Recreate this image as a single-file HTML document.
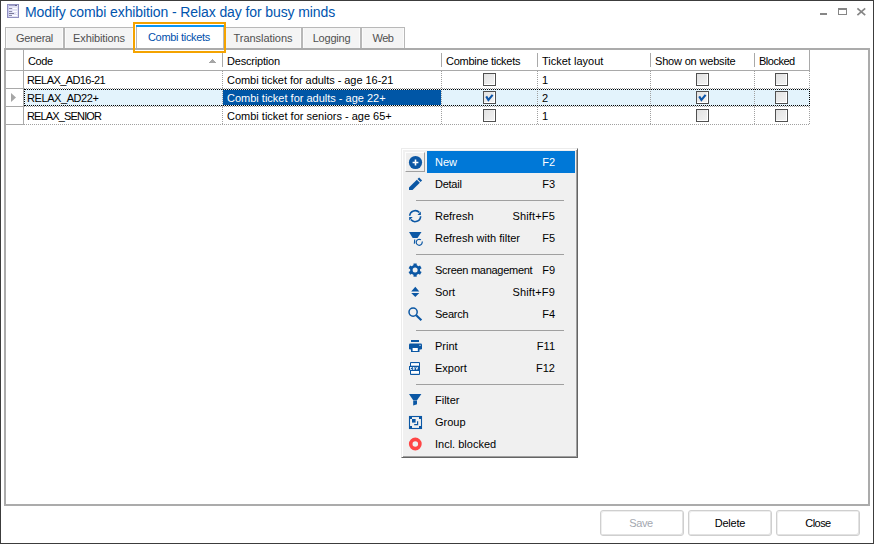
<!DOCTYPE html>
<html><head><meta charset="utf-8">
<style>
*{box-sizing:border-box;margin:0;padding:0}
html,body{width:874px;height:544px;overflow:hidden;background:#fff}
body{position:relative;font-family:"Liberation Sans",sans-serif;font-size:11px;color:#000}
.a{position:absolute}
.win{left:0;top:0;width:874px;height:544px;border:1px solid #3c3c3c}
.title{left:25px;top:4px;font-size:14px;line-height:16px;color:#0054ae;white-space:nowrap;letter-spacing:-0.1px}
.tab{position:absolute;top:27px;height:21px;border:1px solid #b8b8b8;border-bottom:none;background:#f4f4f4;color:#505050;text-align:center;line-height:21px;white-space:nowrap;box-shadow:inset 1px 0 #fbfbfb,inset -1px 0 #fbfbfb}
.grid{left:4px;top:48px;width:866px;height:458px;border:2px solid #ababab}
.hl{position:absolute;background:#a9a9a9}
.t{position:absolute;white-space:nowrap;line-height:13px}
.dv{position:absolute;width:1px;background-image:linear-gradient(#a0a0a0 50%,transparent 50%);background-size:1px 2px}
.dh{position:absolute;height:1px;background-image:linear-gradient(90deg,#a0a0a0 50%,transparent 50%);background-size:2px 1px}
.cb{position:absolute;width:13px;height:13px;border:1px solid #505050;background:linear-gradient(135deg,#e2e2e2,#f3f3f3);box-shadow:inset -1px -1px #fff}
.btn{position:absolute;top:510px;width:84px;height:26px;border:1px solid #cfcfcf;border-radius:3px;background:#fff;box-shadow:inset 1px 1px #eeeeee,inset -1px -1px #e2e2e2;text-align:center;line-height:24px;font-size:11px;color:#000}
.menu{left:401px;top:148px;width:177px;height:310px;background:#f0f0f0;border:1px solid;border-color:#ececec #646464 #646464 #ececec;box-shadow:inset 1px 1px #fff,inset -1px -1px #a0a0a0}
.mi{position:absolute;white-space:nowrap;line-height:13px}
.sep{position:absolute;left:416px;width:148px;height:1px;background:#a0a0a0}
</style></head><body>
<div class="a win"></div>
<!-- title icon -->
<svg class="a" style="left:7px;top:4px" width="12" height="14" viewBox="0 0 12 14">
<rect x="0.5" y="0.5" width="11" height="13" fill="#e2e2f6" stroke="#9090c0"/>
<rect x="1" y="1" width="1" height="12" fill="#c8c8f0"/>
<rect x="2" y="1" width="8" height="1" fill="#a0a0c8"/><rect x="8" y="1" width="2" height="1" fill="#606080"/>
<rect x="2" y="4" width="3" height="1" fill="#8a8aa8"/><rect x="6" y="4" width="4" height="1" fill="#fff"/>
<rect x="2" y="7" width="3" height="1" fill="#8a8aa8"/><rect x="6" y="7" width="4" height="1" fill="#fff"/>
<rect x="2" y="9" width="5" height="1" fill="#7a7a98"/><rect x="9" y="9" width="1" height="1" fill="#fff"/>
<rect x="2" y="11" width="3" height="1" fill="#8a8aa8"/><rect x="5" y="11" width="5" height="1" fill="#fff"/>
</svg>
<div class="a title">Modify combi exhibition - Relax day for busy minds</div>
<!-- window controls -->
<svg class="a" style="left:818px;top:6px" width="52" height="12" viewBox="0 0 52 12">
<rect x="2" y="7" width="7" height="2" fill="#868686"/>
<rect x="20.5" y="2.5" width="8" height="6" fill="none" stroke="#868686"/><rect x="20" y="2" width="9" height="2" fill="#868686"/>
<path d="M39.4 2.4 L47.2 9.2 M47.2 2.4 L39.4 9.2" stroke="#868686" stroke-width="1.7"/>
</svg>

<!-- tabs -->
<div class="tab" style="left:5px;width:59px;letter-spacing:-0.3px">General</div>
<div class="tab" style="left:64px;width:70px;letter-spacing:-0.12px">Exhibitions</div>
<div class="tab" style="left:224px;width:78px;letter-spacing:-0.05px">Translations</div>
<div class="tab" style="left:302px;width:59px;letter-spacing:-0.2px">Logging</div>
<div class="tab" style="left:361px;width:44px;letter-spacing:-0.45px">Web</div>
<div class="a" style="left:136px;top:25px;width:88px;height:23px;background:#fff;border-left:1px solid #b8b8b8;border-right:1px solid #b8b8b8"></div>
<div class="a" style="left:136px;top:25px;width:88px;height:2px;background:#0a96f5"></div>
<div class="a" style="left:136px;top:25px;width:88px;height:23px;color:#0050ac;text-align:center;line-height:21px;padding-top:2px;padding-right:2px;white-space:nowrap;letter-spacing:-0.3px">Combi tickets</div>

<!-- grid -->
<div class="a grid"></div>
<div class="a" style="left:133px;top:22px;width:93px;height:31px;border:2px solid #f4a300"></div>
<!-- header -->
<div class="hl" style="left:23px;top:50px;width:1px;height:20px"></div>
<div class="hl" style="left:222px;top:53px;width:1px;height:14px"></div>
<div class="hl" style="left:441px;top:53px;width:1px;height:14px"></div>
<div class="hl" style="left:537px;top:53px;width:1px;height:14px"></div>
<div class="hl" style="left:650px;top:53px;width:1px;height:14px"></div>
<div class="hl" style="left:754px;top:53px;width:1px;height:14px"></div>
<div class="hl" style="left:809px;top:50px;width:1px;height:21px"></div>
<div class="hl" style="left:6px;top:70px;width:804px;height:1px"></div>
<div class="t" style="left:28px;top:55px;letter-spacing:-0.4px">Code</div>
<svg class="a" style="left:209px;top:59px" width="7" height="4"><path d="M3 0h1v1h1v1h1v1h1v1H0V3h1V2h1V1h1Z" fill="#a6a6a6"/></svg>
<div class="t" style="left:227px;top:55px;letter-spacing:-0.2px">Description</div>
<div class="t" style="left:446px;top:55px;letter-spacing:-0.27px">Combine tickets</div>
<div class="t" style="left:542px;top:55px">Ticket layout</div>
<div class="t" style="left:655px;top:55px;letter-spacing:-0.18px">Show on website</div>
<div class="t" style="left:759px;top:55px;letter-spacing:-0.5px">Blocked</div>
<!-- indicator column -->
<div class="hl" style="left:23px;top:71px;width:1px;height:54px"></div>
<div class="hl" style="left:6px;top:88px;width:17px;height:1px"></div>
<div class="hl" style="left:6px;top:106px;width:17px;height:1px"></div>
<div class="hl" style="left:6px;top:124px;width:17px;height:1px"></div>
<svg class="a" style="left:11px;top:93px" width="6" height="10"><path d="M0 0 L5 4.5 L0 9Z" fill="#a6a6a6"/></svg>
<!-- row dotted lines -->
<div class="a" style="left:24px;top:89px;width:786px;height:17px;background:#e3f3fc"></div>
<div class="a" style="left:223px;top:90px;width:218px;height:15px;background:#0056a6"></div>

<div class="dh" style="left:24px;top:88px;width:786px"></div>
<div class="dh" style="left:24px;top:106px;width:786px"></div>
<div class="dh" style="left:24px;top:124px;width:786px"></div>
<div class="dv" style="left:222px;top:71px;height:54px"></div>
<div class="dv" style="left:441px;top:71px;height:54px"></div>
<div class="dv" style="left:537px;top:71px;height:54px"></div>
<div class="dv" style="left:650px;top:71px;height:54px"></div>
<div class="dv" style="left:754px;top:71px;height:54px"></div>
<div class="dv" style="left:809px;top:71px;height:54px"></div>
<!-- selected row -->
<div class="a" style="left:24px;top:89px;width:786px;height:17px;border:1px dotted #000"></div>
<!-- row texts -->
<div class="t" style="left:27px;top:74px;letter-spacing:-0.58px">RELAX_AD16-21</div>
<div class="t" style="left:227px;top:74px;letter-spacing:-0.05px">Combi ticket for adults - age 16-21</div>
<div class="t" style="left:542px;top:74px">1</div>
<div class="t" style="left:27px;top:92px;letter-spacing:-0.42px">RELAX_AD22+</div>
<div class="t" style="left:227px;top:92px;color:#fff">Combi ticket for adults - age 22+</div>
<div class="t" style="left:542px;top:92px">2</div>
<div class="t" style="left:27px;top:110px;letter-spacing:-0.85px">RELAX_SENIOR</div>
<div class="t" style="left:227px;top:110px">Combi ticket for seniors - age 65+</div>
<div class="t" style="left:542px;top:110px">1</div>
<!-- checkboxes -->
<div class="cb" style="left:483px;top:73px"></div>
<div class="cb" style="left:483px;top:91px"></div>
<div class="cb" style="left:483px;top:109px"></div>
<div class="cb" style="left:696px;top:73px"></div>
<div class="cb" style="left:696px;top:91px"></div>
<div class="cb" style="left:696px;top:109px"></div>
<div class="cb" style="left:775px;top:73px"></div>
<div class="cb" style="left:775px;top:91px"></div>
<div class="cb" style="left:775px;top:109px"></div>
<svg class="a" style="left:485px;top:94px" width="9" height="8"><path d="M1.2 2.4 L3.4 5.9 L7.6 0.8" fill="none" stroke="#0d55a8" stroke-width="2.1"/></svg>
<svg class="a" style="left:698px;top:94px" width="9" height="8"><path d="M1.2 2.4 L3.4 5.9 L7.6 0.8" fill="none" stroke="#0d55a8" stroke-width="2.1"/></svg>

<!-- buttons -->
<div class="btn" style="left:600px;color:#a4a8b0;letter-spacing:-0.45px;text-indent:-2px">Save</div>
<div class="btn" style="left:688px;letter-spacing:-0.2px">Delete</div>
<div class="btn" style="left:776px;letter-spacing:-0.56px">Close</div>

<!-- context menu -->
<div class="a menu"></div>
<!-- New item highlight -->
<div class="a" style="left:405px;top:152px;width:20px;height:20px;border-top:1px solid #fdfdfd;border-left:1px solid #fdfdfd;border-right:1px solid #a0a0a0;border-bottom:1px solid #a0a0a0;background:#eeeeee"></div>
<div class="a" style="left:427px;top:151px;width:148px;height:22px;background:#0078d7"></div>
<div class="mi" style="left:435px;top:156px;color:#fff;">New</div>
<div class="mi" style="right:319px;top:156px;color:#fff">F2</div>
<div class="mi" style="left:435px;top:178px;color:#000;letter-spacing:-0.25px;">Detail</div>
<div class="mi" style="right:319px;top:178px;color:#000">F3</div>
<div class="mi" style="left:435px;top:210px;color:#000;">Refresh</div>
<div class="mi" style="right:319px;top:210px;color:#000;letter-spacing:0.15px">Shift+F5</div>
<div class="mi" style="left:435px;top:232px;color:#000;">Refresh with filter</div>
<div class="mi" style="right:319px;top:232px;color:#000">F5</div>
<div class="mi" style="left:435px;top:264px;color:#000;letter-spacing:-0.28px;">Screen management</div>
<div class="mi" style="right:319px;top:264px;color:#000">F9</div>
<div class="mi" style="left:435px;top:286px;color:#000;">Sort</div>
<div class="mi" style="right:319px;top:286px;color:#000;letter-spacing:0.15px">Shift+F9</div>
<div class="mi" style="left:435px;top:308px;color:#000;letter-spacing:-0.25px;">Search</div>
<div class="mi" style="right:319px;top:308px;color:#000">F4</div>
<div class="mi" style="left:435px;top:340px;color:#000;">Print</div>
<div class="mi" style="right:319px;top:340px;color:#000">F11</div>
<div class="mi" style="left:435px;top:362px;color:#000;">Export</div>
<div class="mi" style="right:319px;top:362px;color:#000">F12</div>
<div class="mi" style="left:435px;top:394px;color:#000;">Filter</div>
<div class="mi" style="left:435px;top:416px;color:#000;">Group</div>
<div class="mi" style="left:435px;top:438px;color:#000;">Incl. blocked</div>
<div class="sep" style="top:200px"></div>
<div class="sep" style="top:254px"></div>
<div class="sep" style="top:330px"></div>
<div class="sep" style="top:384px"></div>

<svg class="a" style="left:407px;top:154px" width="16" height="16" viewBox="0 0 16 16"><circle cx="8.5" cy="8.5" r="6.6" fill="#0b57a4"/><path d="M8.5 5.6V11.4M5.6 8.5H11.4" stroke="#fff" stroke-width="1.6"/></svg>
<svg class="a" style="left:407px;top:176px" width="16" height="16" viewBox="0 0 16 16"><path d="M2 11.5 L9.8 3.7 L12.8 6.7 L5.5 14 L2 14Z" fill="#0b57a4"/><path d="M10.5 3 L12.1 1.4 L15.1 4.4 L13.5 6Z" fill="#0b57a4"/></svg>
<svg class="a" style="left:407px;top:208px" width="16" height="16" viewBox="0 0 16 16"><path d="M2.7 7.8 A5.5 5.5 0 0 1 12.4 4.6" fill="none" stroke="#0b57a4" stroke-width="1.6"/><path d="M13.9 3.6 L13.9 7 L10.5 7Z" fill="#0b57a4"/><path d="M13.6 8.2 A5.5 5.5 0 0 1 3.8 11.6" fill="none" stroke="#0b57a4" stroke-width="1.6"/><path d="M2.2 9 L5.7 9 L2.2 12.6Z" fill="#0b57a4"/></svg>
<svg class="a" style="left:407px;top:230px" width="16" height="16" viewBox="0 0 16 16"><path d="M2 2 L14.5 2 L10.5 7.9 L5.7 7.9Z" fill="#0b57a4"/><path d="M7.2 9.4 L8.3 9.4 L7.9 13.8 L6.8 13.8Z" fill="#0b57a4"/><path d="M15.1 11.52 A3 3 0 1 1 13.92 9.84" fill="none" stroke="#0b57a4" stroke-width="1.2"/></svg>
<svg class="a" style="left:407px;top:262px" width="16" height="16" viewBox="0 0 16 16"><g transform="translate(8.1 8.1)" fill="#0b57a4"><circle r="5"/><rect x="-1.6" y="-6.6" width="3.2" height="13.2"/><rect x="-1.6" y="-6.6" width="3.2" height="13.2" transform="rotate(60)"/><rect x="-1.6" y="-6.6" width="3.2" height="13.2" transform="rotate(-60)"/></g><circle cx="8.1" cy="8.1" r="2.5" fill="#f0f0f0"/></svg>
<svg class="a" style="left:407px;top:284px" width="16" height="16" viewBox="0 0 16 16"><path d="M4.2 7.6 L12.3 7.6 L8.3 2.8Z M4.2 8.9 L12.3 8.9 L8.3 13Z" fill="#0b57a4"/></svg>
<svg class="a" style="left:407px;top:306px" width="16" height="16" viewBox="0 0 16 16"><circle cx="6.1" cy="6.1" r="4.1" fill="none" stroke="#0b57a4" stroke-width="1.5"/><path d="M9.2 9.2 L14.4 14.2" stroke="#0b57a4" stroke-width="2.2"/></svg>
<svg class="a" style="left:407px;top:338px" width="16" height="16" viewBox="0 0 16 16"><rect x="4" y="2" width="8" height="2" fill="#0b57a4"/><rect x="2" y="5.5" width="13" height="6" rx="1.2" fill="#0b57a4"/><rect x="4" y="9" width="8.5" height="5" fill="#0b57a4"/><rect x="5.6" y="10" width="5.2" height="3" fill="#fff"/><rect x="12.4" y="6.8" width="1.2" height="1" fill="#fff"/></svg>
<svg class="a" style="left:407px;top:360px" width="16" height="16" viewBox="0 0 16 16"><rect x="3" y="2" width="10" height="13" rx="1" fill="#0b57a4"/><rect x="4" y="3.1" width="8" height="2.6" fill="#fff"/><rect x="4" y="11" width="8" height="2.8" fill="#fff"/><rect x="2" y="6" width="9.6" height="4.2" fill="#0b57a4"/><path d="M3 7h2v.8h-1.2v1.2h1.2v.8h-2z M5.8 7h1.8v.8h-1v.3h1v1.7h-1.8v-.8h1v-.3h-1z M8.4 7h.9l.5 1.6.5-1.6h.9l-1 2.8h-.8z" fill="#fff"/></svg>
<svg class="a" style="left:407px;top:392px" width="16" height="16" viewBox="0 0 16 16"><path d="M2 2 L14.4 2 L10 8.2 L6.2 8.2Z" fill="#0b57a4"/><path d="M6.2 8.4 L10 8.4 L10 12.2 L8.6 12.8 L6.2 13.4Z" fill="#0b57a4"/></svg>
<svg class="a" style="left:407px;top:414px" width="16" height="16" viewBox="0 0 16 16"><rect x="2.5" y="2.5" width="12" height="12" fill="none" stroke="#0b57a4" stroke-width="1.1"/><rect x="2" y="2" width="3" height="3" fill="#0b57a4"/><rect x="12" y="2" width="3" height="3" fill="#0b57a4"/><rect x="2" y="12" width="3" height="3" fill="#0b57a4"/><rect x="12" y="12" width="3" height="3" fill="#0b57a4"/><rect x="5" y="5" width="3.6" height="3.6" fill="#0b57a4"/><path d="M10.6 7.2 V10.6 H7.2" fill="none" stroke="#0b57a4" stroke-width="1.2"/></svg>
<svg class="a" style="left:407px;top:436px" width="16" height="16" viewBox="0 0 16 16"><circle cx="8.3" cy="8" r="4.6" fill="none" stroke="#ff4646" stroke-width="3.6"/></svg>
</body></html>
